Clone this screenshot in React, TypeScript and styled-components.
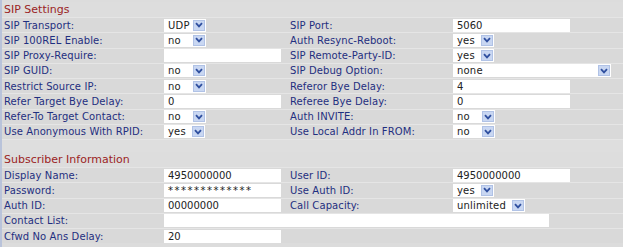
import styled, { createGlobalStyle } from 'styled-components';

const GlobalStyle = createGlobalStyle`
  html, body {
    margin: 0;
    padding: 0;
    background: #dcdcdc;
  }
  body {
    font-family: 'DejaVu Sans', Verdana, sans-serif;
  }
`;

const Page = styled.div`
  width: 623px;
  height: 247px;
  overflow: hidden;
  background: #dcdcdc;
  border-left: 2px solid #b9c3da;
  box-sizing: border-box;
  padding-top: 2px;
`;

const SectionTitle = styled.div`
  height: 15px;
  line-height: 16px;
  padding-left: 2px;
  font-size: 11px;
  color: #9b2424;
  background: #dddddd;
`;

const Spacer = styled.div`
  height: 12px;
  background: #dedede;
  border-top: 1px solid #e5e5e5;
`;

const Row = styled.div`
  display: grid;
  grid-template-columns: 159px 127px 162px 1fr;
  height: 15.25px;
  box-sizing: border-box;
  align-items: center;
  background: #d9d9d9;
  border-top: 1px solid #e5e5e5;
`;

const Label = styled.div`
  padding-left: 2px;
  font-size: 10px;
  letter-spacing: 0.1px;
  color: #1f2f80;
  white-space: nowrap;
  overflow: hidden;
`;

const Cell = styled.div<{ $span?: number }>`
  padding-left: 3px;
  display: flex;
  align-items: center;
  ${(p) => (p.$span ? `grid-column: span ${p.$span};` : '')}
`;

const TextBox = styled.div<{ $w: number; $masked?: boolean }>`
  width: ${(p) => p.$w}px;
  height: 13px;
  background: #ffffff;
  box-sizing: border-box;
  padding-left: 4px;
  font-size: 10px;
  line-height: 13px;
  letter-spacing: ${(p) => (p.$masked ? '1.5px' : '0')};
  color: #222;
  white-space: nowrap;
  overflow: hidden;
`;

const SelectBox = styled.div<{ $w: number }>`
  width: ${(p) => p.$w}px;
  height: 13px;
  background: #ffffff;
  box-sizing: border-box;
  padding: 0 1px 0 4px;
  display: flex;
  align-items: center;
  justify-content: space-between;
  font-size: 10px;
  letter-spacing: 0.2px;
  color: #222;
`;

const Arrow = styled.span`
  width: 12px;
  height: 11px;
  background: #c9d7f2;
  border: 1px solid #b0c2e6;
  box-sizing: border-box;
  display: flex;
  align-items: center;
  justify-content: center;
`;

function Select({ value, w }: { value: string; w: number }) {
  return (
    <SelectBox $w={w}>
      <span>{value}</span>
      <Arrow>
        <svg width='8' height='6' viewBox='0 0 8 6'>
          <path d='M1 1.2 L4 4.4 L7 1.2' fill='none' stroke='#2f4f9f' strokeWidth='1.8' />
        </svg>
      </Arrow>
    </SelectBox>
  );
}

type Field =
  | { kind: 'text'; value: string; w?: number; span?: number; masked?: boolean }
  | { kind: 'select'; value: string; w: number };

type Pair = [string, Field, string?, Field?];

const sip: Pair[] = [
  ['SIP Transport:', { kind: 'select', value: 'UDP', w: 42 }, 'SIP Port:', { kind: 'text', value: '5060' }],
  ['SIP 100REL Enable:', { kind: 'select', value: 'no', w: 42 }, 'Auth Resync-Reboot:', { kind: 'select', value: 'yes', w: 41 }],
  ['SIP Proxy-Require:', { kind: 'text', value: '' }, 'SIP Remote-Party-ID:', { kind: 'select', value: 'yes', w: 41 }],
  ['SIP GUID:', { kind: 'select', value: 'no', w: 42 }, 'SIP Debug Option:', { kind: 'select', value: 'none', w: 158 }],
  ['Restrict Source IP:', { kind: 'select', value: 'no', w: 42 }, 'Referor Bye Delay:', { kind: 'text', value: '4' }],
  ['Refer Target Bye Delay:', { kind: 'text', value: '0' }, 'Referee Bye Delay:', { kind: 'text', value: '0' }],
  ['Refer-To Target Contact:', { kind: 'select', value: 'no', w: 42 }, 'Auth INVITE:', { kind: 'select', value: 'no', w: 42 }],
  ['Use Anonymous With RPID:', { kind: 'select', value: 'yes', w: 41 }, 'Use Local Addr In FROM:', { kind: 'select', value: 'no', w: 42 }],
];

const subscriber: Pair[] = [
  ['Display Name:', { kind: 'text', value: '4950000000' }, 'User ID:', { kind: 'text', value: '4950000000' }],
  ['Password:', { kind: 'text', value: '*************', masked: true }, 'Use Auth ID:', { kind: 'select', value: 'yes', w: 41 }],
  ['Auth ID:', { kind: 'text', value: '00000000' }, 'Call Capacity:', { kind: 'select', value: 'unlimited', w: 72 }],
  ['Contact List:', { kind: 'text', value: '', w: 385, span: 3 }],
  ['Cfwd No Ans Delay:', { kind: 'text', value: '20' }],
];

function FieldCell({ f }: { f: Field }) {
  if (f.kind === 'select') {
    return (
      <Cell>
        <Select value={f.value} w={f.w} />
      </Cell>
    );
  }
  return (
    <Cell $span={f.span}>
      <TextBox $w={f.w ?? 117} $masked={f.masked}>
        {f.value}
      </TextBox>
    </Cell>
  );
}

function Rows({ items }: { items: Pair[] }) {
  return (
    <>
      {items.map(([l1, f1, l2, f2]) => (
        <Row key={l1}>
          <Label>{l1}</Label>
          <FieldCell f={f1} />
          {l2 && <Label>{l2}</Label>}
          {f2 && <FieldCell f={f2} />}
        </Row>
      ))}
    </>
  );
}

export default function App() {
  return (
    <>
      <GlobalStyle />
      <Page>
        <SectionTitle>SIP Settings</SectionTitle>
        <Rows items={sip} />
        <Spacer />
        <SectionTitle>Subscriber Information</SectionTitle>
        <Rows items={subscriber} />
      </Page>
    </>
  );
}
